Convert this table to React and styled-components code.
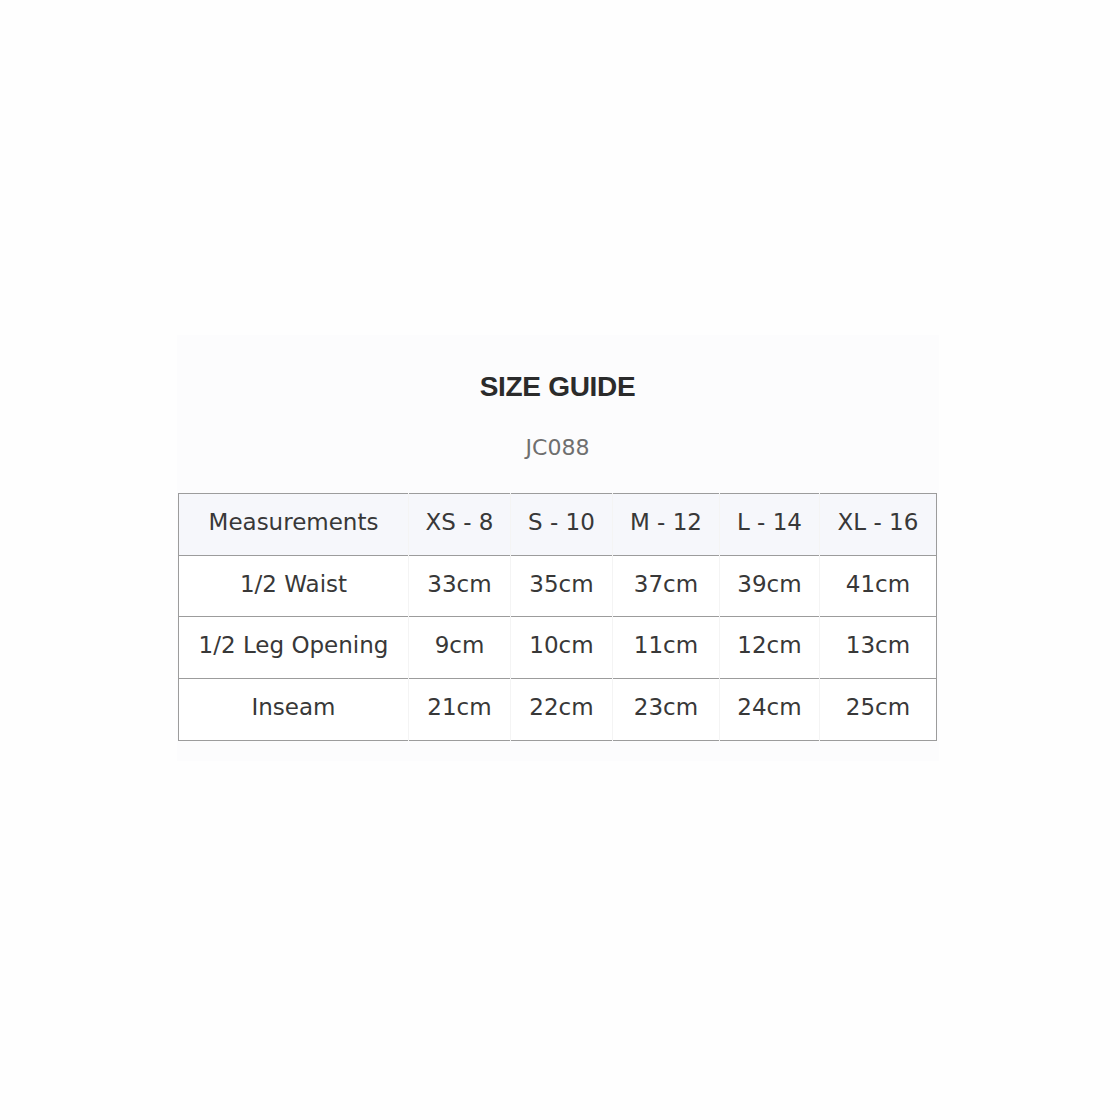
import styled, { createGlobalStyle } from 'styled-components';

const GlobalStyle = createGlobalStyle`
    html, body {
        margin: 0;
        padding: 0;
        background: #fefefe;
    }
`;

const Page = styled.div`
    min-height: 1120px;
    display: flex;
    justify-content: center;
    align-items: flex-start;
    padding-top: 335px;
    box-sizing: border-box;
`;

const Panel = styled.section`
    width: 762px;
    margin-left: -5px;
    padding: 35px 0 20px;
    background: #fcfcfd;
    display: flex;
    flex-direction: column;
    align-items: center;
`;

const Title = styled.h2`
    margin: 0;
    font-family: "Liberation Sans", Arial, sans-serif;
    font-weight: 700;
    font-size: 28px;
    line-height: 34px;
    letter-spacing: -0.3px;
    color: #2b2b2b;
`;

const Code = styled.div`
    margin-top: 30px;
    font-family: "DejaVu Sans", sans-serif;
    font-size: 22px;
    line-height: 28px;
    color: #6f6f6f;
`;

const Table = styled.table`
    margin-top: 31px;
    width: 758px;
    border-collapse: collapse;
    table-layout: fixed;
    border: 1px solid #9c9c9c;
    font-family: "DejaVu Sans", sans-serif;
    font-size: 23px;
    color: #383838;
`;

const Col = styled.col`
    width: ${(p) => p.$w}px;
`;

const Row = styled.tr`
    height: 61.7px;
    background: ${(p) => (p.$head ? '#f6f7fb' : '#ffffff')};
    border-bottom: 1px solid #9c9c9c;
`;

const Cell = styled.td`
    padding: 0 0 5px;
    text-align: center;
    vertical-align: middle;
    white-space: nowrap;
    border-left: 1px solid #f4f4f4;
    &:first-child {
        border-left: none;
    }
`;

const sizes = ['XS - 8', 'S - 10', 'M - 12', 'L - 14', 'XL - 16'];

const rows = [
    { label: '1/2 Waist', values: ['33cm', '35cm', '37cm', '39cm', '41cm'] },
    { label: '1/2 Leg Opening', values: ['9cm', '10cm', '11cm', '12cm', '13cm'] },
    { label: 'Inseam', values: ['21cm', '22cm', '23cm', '24cm', '25cm'] },
];

const widths = [230, 102, 102, 107, 100, 117];

const App = () => {
    return (
        <>
            <GlobalStyle />
            <Page>
                <Panel>
                    <Title>SIZE GUIDE</Title>
                    <Code>JC088</Code>
                    <Table>
                        <colgroup>
                            {widths.map((w, i) => (
                                <Col key={i} $w={w} />
                            ))}
                        </colgroup>
                        <tbody>
                            <Row $head>
                                <Cell>Measurements</Cell>
                                {sizes.map((s) => (
                                    <Cell key={s}>{s}</Cell>
                                ))}
                            </Row>
                            {rows.map((row) => (
                                <Row key={row.label}>
                                    <Cell>{row.label}</Cell>
                                    {row.values.map((v) => (
                                        <Cell key={v}>{v}</Cell>
                                    ))}
                                </Row>
                            ))}
                        </tbody>
                    </Table>
                </Panel>
            </Page>
        </>
    );
};

export default App;
